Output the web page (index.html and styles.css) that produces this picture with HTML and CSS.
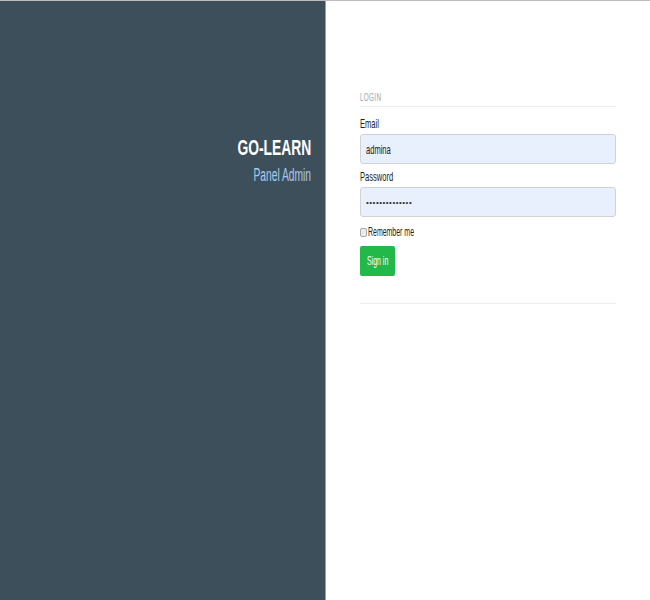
FILE: index.html
```html
<!DOCTYPE html>
<html>
<head>
<meta charset="utf-8">
<link rel="stylesheet" href="styles.css">
</head>
<body>
<div class="topline"></div>
<div class="page">
  <aside class="brand">
    <div class="brand-title"><span class="nx nx-r">GO-LEARN</span></div>
    <div class="brand-sub"><span class="nx nx-r">Panel Admin</span></div>
  </aside>
  <main class="login">
    <div class="login-head"><span class="nx">LOGIN</span></div>
    <div class="label"><span class="nx">Email</span></div>
    <div class="field"><span class="nx">admina</span></div>
    <div class="label"><span class="nx">Password</span></div>
    <div class="field"><span class="dots">••••••••••••••</span></div>
    <div class="remember"><span class="check"></span><span class="nx">Remember me</span></div>
    <div class="btn"><span class="nx">Sign in</span></div>
    <div class="rule"></div>
  </main>
</div>
</body>
</html>
```
FILE: styles.css
```css
html, body {
  margin: 0;
  padding: 0;
  background: #ffffff;
  font-family: "Liberation Sans", Arial, sans-serif;
}
.topline {
  height: 1px;
  background: #bdbdbd;
}
.page {
  display: flex;
  height: 599px;
}
.brand {
  width: 326px;
  box-sizing: border-box;
  background: #3e4f5c;
  border-right: 1px solid #97a1aa;
  text-align: right;
  padding: 135px 14px 0 0;
}
.nx {
  display: inline-block;
  transform: scaleX(0.58);
  transform-origin: left center;
  white-space: nowrap;
}
.nx-r {
  transform-origin: right center;
}
.brand-title {
  color: #ffffff;
  font-weight: bold;
  font-size: 22px;
  line-height: 24px;
}
.brand-title .nx { transform: scaleX(0.63); }
.brand-sub {
  color: #a9cbeb;
  font-size: 18px;
  line-height: 22px;
  margin-top: 4px;
}
.brand-sub .nx { transform: scaleX(0.57); }
.login {
  padding: 90px 0 0 34px;
  width: 256px;
}
.login-head {
  color: #9aa4ad;
  font-size: 11px;
  line-height: 12px;
  letter-spacing: 0.5px;
  padding-bottom: 3px;
  border-bottom: 1px solid #ececec;
}
.label {
  color: #222;
  font-size: 13px;
  line-height: 15px;
  margin-top: 9px;
  margin-bottom: 3px;
}
.field {
  height: 30px;
  box-sizing: border-box;
  border: 1px solid #cfd3d8;
  border-radius: 3px;
  background: #e8f0fe;
  padding: 0 5px;
  display: flex;
  align-items: center;
  font-size: 13px;
  color: #222;
}
.field + .label { margin-top: 5px; }
.dots {
  font-size: 8px;
  letter-spacing: 0.5px;
  color: #333;
}
.remember {
  display: flex;
  align-items: center;
  margin-top: 8px;
  font-size: 12px;
  line-height: 14px;
  color: #222;
}
.check {
  width: 5px;
  height: 7px;
  border: 1px solid #a8a8a8;
  border-radius: 2px;
  background: #ececec;
  margin-right: 1px;
}
.btn {
  margin-top: 7px;
  width: 35px;
  height: 30px;
  background: #22b84a;
  border-radius: 2px;
  color: #fff;
  font-size: 12px;
  display: flex;
  align-items: center;
  padding-left: 7px;
  box-sizing: border-box;
}
.rule {
  margin-top: 27px;
  height: 1px;
  background: #ececec;
}
```
